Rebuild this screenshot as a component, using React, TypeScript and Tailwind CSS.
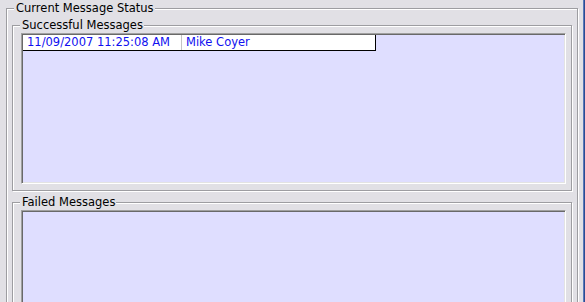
import React from 'react';

const font = { fontFamily: '"DejaVu Sans", Verdana, sans-serif' };

const GroupBox: React.FC<{ title: string; className?: string; children: React.ReactNode }> = ({
  title,
  className,
  children,
}) => (
  <div
    className={`relative border border-[#9d9da1] shadow-[inset_1px_1px_0_#ffffff,1px_1px_0_#ffffff] ${className ?? ''}`}
  >
    <span className="absolute left-[7px] top-[-8px] bg-[#e1e0e5] pl-[2px] pr-[1px] text-[11.5px] leading-[14px] text-black">
      {title}
    </span>
    {children}
  </div>
);

const ListBox: React.FC<{ className?: string; children?: React.ReactNode }> = ({ className, children }) => (
  <div
    className={`bg-[#dfdeff] border border-t-[#a0a0a0] border-l-[#a0a0a0] border-r-white border-b-white p-px shadow-[inset_1px_1px_0_#696969,inset_-1px_-1px_0_#e3e3e3] ${className ?? ''}`}
  >
    {children}
  </div>
);

export default function App() {
  const messages = [{ time: '11/09/2007 11:25:08 AM', name: 'Mike Coyer' }];

  return (
    <div className="w-[585px] h-[302px] overflow-hidden bg-[#e1e0e5] flex" style={font}>
      <div className="w-[583px] pl-[6px] pt-[8px]">
        <GroupBox title="Current Message Status" className="w-[572px] h-[400px] pl-[5px] pt-[16px]">
          <GroupBox title="Successful Messages" className="w-[560px] h-[166px] pl-[8px] pt-[7px]">
            <ListBox className="w-[545px] h-[151px]">
              {messages.map((m) => (
                <div
                  key={m.time}
                  className="flex w-[353px] h-[16px] bg-white border-r border-b border-black text-[11.5px] leading-[15px] text-[#1010f0]"
                >
                  <div className="w-[159px] pl-[4px] border-r border-[#c4c4c4] whitespace-nowrap">{m.time}</div>
                  <div className="flex-1 pl-[4px] whitespace-nowrap">{m.name}</div>
                </div>
              ))}
            </ListBox>
          </GroupBox>
          <GroupBox title="Failed Messages" className="w-[560px] h-[200px] mt-[11px] pl-[8px] pt-[7px]">
            <ListBox className="w-[545px] h-[151px]" />
          </GroupBox>
        </GroupBox>
      </div>
      <div className="w-[2px] h-full bg-[#2a4b94] border-l border-[#5a78b8]" />
    </div>
  );
}
